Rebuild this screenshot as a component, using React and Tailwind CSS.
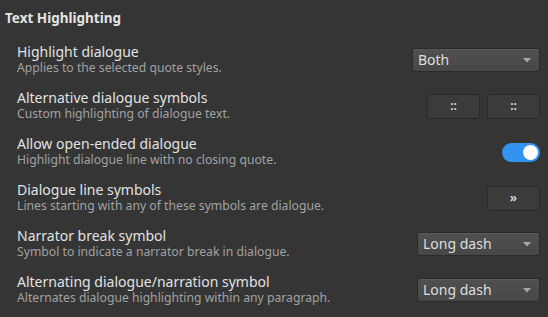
import React from "react";

function Select({ value, w }) {
  return (
    <div
      className={`${w} h-[24px] flex items-center justify-between pl-[5px] pr-[8px] rounded-[3px] border border-[#2a2a2a] bg-gradient-to-b from-[#505050] to-[#474747] text-[#dedede] text-[14px] shadow-[inset_0_1px_0_rgba(255,255,255,0.06)]`}
    >
      <span className="leading-none">{value}</span>
      <svg width="8" height="5" viewBox="0 0 8 5">
        <path d="M0 0 L8 0 L4 4.5 Z" fill="#a8a8a8" />
      </svg>
    </div>
  );
}

function Btn({ children }) {
  return (
    <div className="w-[53px] h-[25px] flex items-center justify-center rounded-[3px] border border-[#292929] bg-[#3b3b3b] text-[#d0d0d0] text-[12px] font-bold leading-none">
      {children}
    </div>
  );
}

function Row({ title, desc, children }) {
  return (
    <div className="h-[46px] flex items-center justify-between pl-[17px] pr-[8px]">
      <div className="flex flex-col">
        <div className="text-[14px] leading-[16px] text-[#e2e2e2]">{title}</div>
        <div className="text-[12.2px] leading-[16px] text-[#a2a2a2]">{desc}</div>
      </div>
      {children}
    </div>
  );
}

export default function App() {
  return (
    <div
      className="w-[548px] h-[317px] bg-[#353535] overflow-hidden"
      style={{ fontFamily: '"Noto Sans", "Open Sans", sans-serif' }}
    >
      <div className="pt-[8px] pl-[5px] h-[37px]">
        <div className="text-[13.5px] leading-[20px] font-bold text-[#e4e4e4]">Text Highlighting</div>
      </div>
      <Row title="Highlight dialogue" desc="Applies to the selected quote styles.">
        <Select value="Both" w="w-[128px]" />
      </Row>
      <Row title="Alternative dialogue symbols" desc="Custom highlighting of dialogue text.">
        <div className="flex gap-[7px]">
          <Btn>::</Btn>
          <Btn>::</Btn>
        </div>
      </Row>
      <Row title="Allow open-ended dialogue" desc="Highlight dialogue line with no closing quote.">
        <div className="w-[38px] h-[19px] rounded-full bg-[#3294f0] flex items-center justify-end pr-[2px]">
          <div className="w-[15px] h-[15px] rounded-full bg-white" />
        </div>
      </Row>
      <Row title="Dialogue line symbols" desc="Lines starting with any of these symbols are dialogue.">
        <Btn>»</Btn>
      </Row>
      <Row title="Narrator break symbol" desc="Symbol to indicate a narrator break in dialogue.">
        <Select value="Long dash" w="w-[123px]" />
      </Row>
      <Row title="Alternating dialogue/narration symbol" desc="Alternates dialogue highlighting within any paragraph.">
        <Select value="Long dash" w="w-[123px]" />
      </Row>
    </div>
  );
}
